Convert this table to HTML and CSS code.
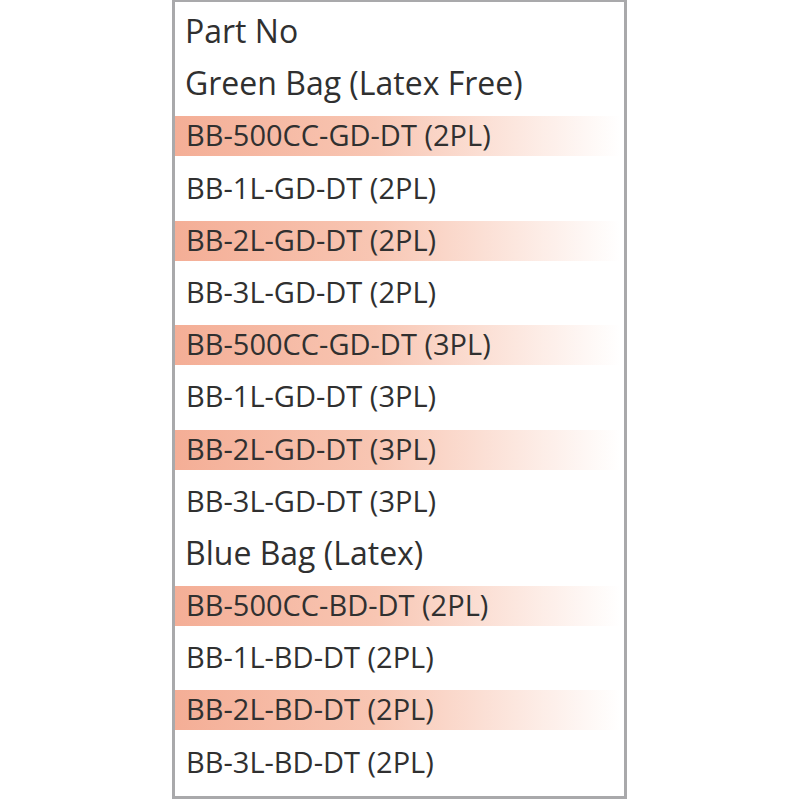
FILE: index.html
```html
<!DOCTYPE html>
<html>
<head>
<meta charset="utf-8">
<link rel="stylesheet" href="styles.css">
</head>
<body>
<div class="panel">
  <div class="row head">Part No</div>
  <div class="row head">Green Bag (Latex Free)</div>
  <div class="row hl">BB-500CC-GD-DT (2PL)</div>
  <div class="row">BB-1L-GD-DT (2PL)</div>
  <div class="row hl">BB-2L-GD-DT (2PL)</div>
  <div class="row">BB-3L-GD-DT (2PL)</div>
  <div class="row hl">BB-500CC-GD-DT (3PL)</div>
  <div class="row">BB-1L-GD-DT (3PL)</div>
  <div class="row hl">BB-2L-GD-DT (3PL)</div>
  <div class="row">BB-3L-GD-DT (3PL)</div>
  <div class="row head">Blue Bag (Latex)</div>
  <div class="row hl">BB-500CC-BD-DT (2PL)</div>
  <div class="row">BB-1L-BD-DT (2PL)</div>
  <div class="row hl">BB-2L-BD-DT (2PL)</div>
  <div class="row">BB-3L-BD-DT (2PL)</div>
</div>
</body>
</html>
```

FILE: styles.css
```css
html, body {
  margin: 0;
  padding: 0;
  background: #fff;
}
.panel {
  margin-left: 172px;
  width: 455px;
  height: 799px;
  box-sizing: border-box;
  border: 3px solid #a9a9ab;
  border-top-width: 2px;
  padding-top: 4px;
  display: flex;
  flex-direction: column;
  font-family: "Open Sans", sans-serif;
  font-size: 29px;
  color: #303030;
}
.row {
  height: 40px;
  box-sizing: border-box;
  margin: 6px 4px 6.2px 0;
  padding: 0 0 3px 11px;
  display: flex;
  align-items: center;
  line-height: 1;
  white-space: nowrap;
}
.head {
  font-size: 32px;
  padding-left: 10px;
  padding-bottom: 2px;
}
.hl {
  background: linear-gradient(to right, #f4ae96 0%, #f8c6b3 45%, #ffffff 100%);
}
```
